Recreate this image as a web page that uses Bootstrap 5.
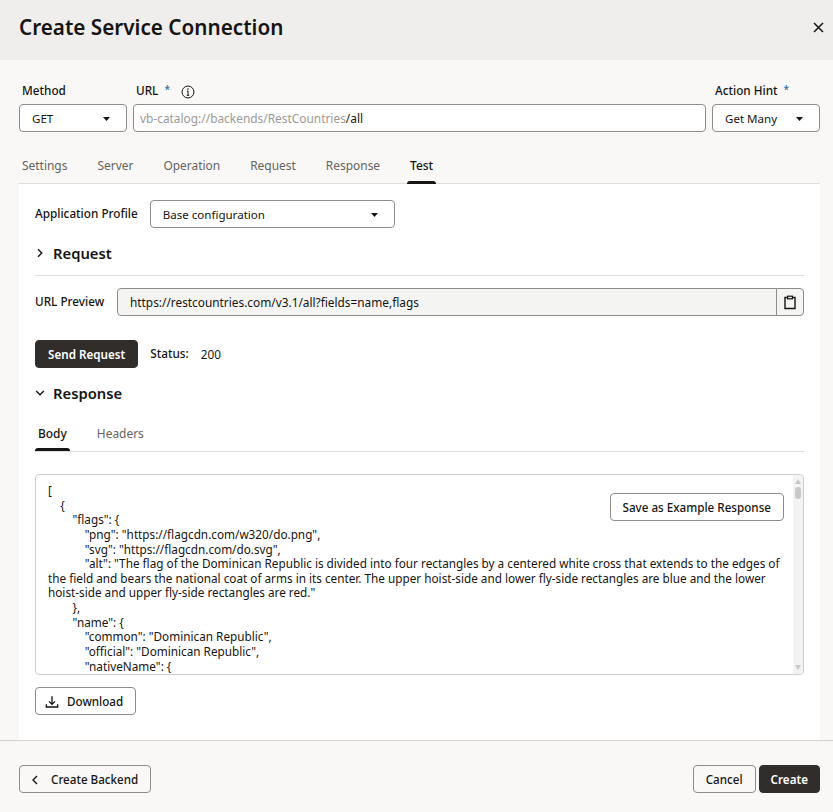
<!DOCTYPE html>
<html lang="en">
<head>
<meta charset="utf-8">
<title>Create Service Connection</title>
<link href="https://cdn.jsdelivr.net/npm/bootstrap@5.3.0/dist/css/bootstrap.min.css" rel="stylesheet">
<style>
html,body{height:100%;}
body{font-family:"Noto Sans","Open Sans",sans-serif;font-size:11.75px;color:#161513;background:#f9f8f6;overflow:hidden;}
.dlg{width:833px;height:812px;display:flex;flex-direction:column;}
.dlg-head{height:60px;background:#efeeec;padding:0 5px 0 19px;flex:none;}
.dlg-title{font-size:20.7px;font-weight:600;line-height:28px;margin:-6px 0 0;color:#161513;}
.icon-plain{background:none;border:0;padding:0;width:20px;height:20px;display:flex;align-items:center;justify-content:center;color:#161513;margin-top:-6px;}
.dlg-main{flex:1 1 auto;min-height:0;padding:0 13px 0 19px;display:flex;flex-direction:column;}
.top-form{padding-top:23px;gap:6px;}
.fld-label{font-size:11.75px;font-weight:500;line-height:15px;height:21px;padding-left:3px;color:#161513;display:flex;align-items:flex-start;}
.req{color:#2a6ea6;margin-left:6px;font-size:10px;line-height:12px;}
.info-ic{margin:2px 0 0 11px;}
.fld-method{width:108px;flex:none;}
.fld-url{flex:1 1 auto;min-width:0;}
.fld-hint{width:108px;flex:none;}
.fake-select{height:28px;border:1px solid #8e8c89;border-radius:4px;background:#fff;display:flex;align-items:center;justify-content:space-between;padding:1px 16px 0 12px;font-size:11.55px;color:#161513;}
.url-box{height:28px;border:1px solid #8e8c89;border-radius:4px;background:#fff;padding:1px 6px 0;display:flex;align-items:center;font-size:11.9px;}
.url-base{color:#9b9996;}
.tabs-main{border-bottom:1px solid #dfdedc;padding-left:3px;gap:30px;margin-top:20px;height:32px;}
.tabs-main .nav-link,.tabs-sub .nav-link{position:relative;padding:0;color:#65635f;font-size:11.95px;background:none;border:0;}
.tabs-main .nav-link{line-height:28px;}
.tabs-main .nav-link.active,.tabs-sub .nav-link.active{color:#161513;font-weight:500;}
.tabs-main .nav-link.active::after,.tabs-sub .nav-link.active::after{content:"";position:absolute;left:-3px;right:-3px;height:3px;background:#161513;border-radius:3px 3px 0 0;}
.tabs-main .nav-link.active::after{top:29px;}
.panel{flex:1 1 auto;min-height:0;background:#fff;padding:16px 16px 0;}
.lbl-strong{font-size:11.75px;font-weight:500;color:#161513;}
.profile-sel{width:245px;}
.sec-head{height:20px;gap:8px;}
.sec-head-req{margin-top:15px;}
.sec-title{font-size:14.8px;font-weight:600;line-height:20px;margin:0;color:#161513;}
.sec-rule{margin:12px 0 12px;border:0;border-top:1px solid #dfdedc;opacity:1;}
.lbl-preview{width:82px;flex:none;}
.url-group{flex:1 1 auto;width:auto;height:28px;}
.url-prev{height:28px;min-height:28px;font-size:11.85px;background:#f4f4f3;border:1px solid #8e8c89;border-radius:4px 0 0 4px;padding:0 12px;color:#161513;}
.url-copy{width:28px;height:28px;padding:0;background:#f4f4f3;border:1px solid #8e8c89;border-radius:0 4px 4px 0;display:flex;align-items:center;justify-content:center;}
.btn-dark-ui{height:28px;background:#312d2a;border:1px solid #312d2a;color:#fff;font-size:11.65px;font-weight:600;border-radius:4px;padding:1px 12px 0;line-height:1;}
.btn-create{padding:1px 11px 0;}
.btn-line{height:28px;background:#fff;border:1px solid #8e8c89;color:#161513;font-size:11.65px;font-weight:500;border-radius:4px;padding:1px 12px 0;line-height:1;display:inline-flex;align-items:center;}
.send-row{margin-top:24px;gap:12px;}
.status-val{padding-top:1px;}
.resp-head{margin-top:15px;}
.tabs-sub{border-bottom:1px solid #dfdedc;padding-left:3px;gap:30px;margin-top:20px;height:29px;}
.tabs-sub .nav-link{line-height:21px;}
.tabs-sub .nav-link.active::after{top:25px;}
.resp-box{position:relative;margin-top:22px;height:201px;border:1px solid #cfcecc;border-radius:4px;display:flex;overflow:hidden;background:#fff;}
.code-area{flex:1 1 auto;min-width:0;margin:0;padding:8px 0 0 12px;font-family:inherit;font-size:11.75px;line-height:14.63px;white-space:pre-wrap;overflow:hidden;color:#161513;}
.scroll-rail{width:10px;flex:none;background:#f3f3f2;display:flex;flex-direction:column;align-items:center;}
.arrow-up{width:0;height:0;border-left:3.5px solid transparent;border-right:3.5px solid transparent;border-bottom:5px solid #c9c8c6;margin-top:4px;}
.arrow-down{width:0;height:0;border-left:3.5px solid transparent;border-right:3.5px solid transparent;border-top:5px solid #c9c8c6;margin-top:auto;margin-bottom:4px;}
.thumb{width:6px;height:12px;border-radius:3px;background:#c9c8c6;margin-top:3px;}
.save-btn{position:absolute;top:18px;right:19px;}
.dl-row{margin-top:12px;}
.dl-btn{gap:8px;padding:1px 12px 0 9px;}
.dlg-foot{height:72px;flex:none;border-top:1px solid #d6d2cd;padding:5px 13px 0 19px;background:#f9f8f6;}
.btn-back{gap:12px;padding:1px 12px 0 11px;background:transparent;}
.btn-cancel{background:transparent;}
.foot-right{gap:3px;}
</style>
</head>
<body>
<div class="dlg">
  <header class="dlg-head d-flex align-items-center justify-content-between">
    <h1 class="dlg-title">Create Service Connection</h1>
    <button class="icon-plain" type="button" aria-label="Close">
      <svg width="11" height="11" viewBox="0 0 11 11"><path d="M1 1l9 9M10 1l-9 9" stroke="#161513" stroke-width="1.5" fill="none"/></svg>
    </button>
  </header>

  <main class="dlg-main">
    <div class="top-form d-flex">
      <div class="fld-method">
        <div class="fld-label">Method</div>
        <div class="fake-select"><span>GET</span><svg width="7" height="4" viewBox="0 0 7 4"><path d="M0 0h7L3.5 4z" fill="#161513"/></svg></div>
      </div>
      <div class="fld-url">
        <div class="fld-label">URL<span class="req">*</span>
          <svg class="info-ic" width="14" height="14" viewBox="0 0 14 14" fill="none"><circle cx="7" cy="7" r="6" stroke="#161513" stroke-width="1"/><path d="M7 6v4.2M5.8 10.3h2.4M5.9 6h1.1" stroke="#161513" stroke-width="1"/><circle cx="7" cy="4" r=".8" fill="#161513"/></svg>
        </div>
        <div class="url-box"><span class="url-base">vb-catalog://backends/RestCountries</span><span>/all</span></div>
      </div>
      <div class="fld-hint">
        <div class="fld-label">Action Hint<span class="req">*</span></div>
        <div class="fake-select"><span>Get Many</span><svg width="7" height="4" viewBox="0 0 7 4"><path d="M0 0h7L3.5 4z" fill="#161513"/></svg></div>
      </div>
    </div>

    <ul class="nav tabs-main">
      <li class="nav-item"><a class="nav-link" href="#">Settings</a></li>
      <li class="nav-item"><a class="nav-link" href="#">Server</a></li>
      <li class="nav-item"><a class="nav-link" href="#">Operation</a></li>
      <li class="nav-item"><a class="nav-link" href="#">Request</a></li>
      <li class="nav-item"><a class="nav-link" href="#">Response</a></li>
      <li class="nav-item"><a class="nav-link active" href="#">Test</a></li>
    </ul>

    <section class="panel">
      <div class="d-flex align-items-center gap-2">
        <span class="lbl-strong me-1">Application Profile</span>
        <div class="fake-select profile-sel"><span>Base configuration</span><svg width="7" height="4" viewBox="0 0 7 4"><path d="M0 0h7L3.5 4z" fill="#161513"/></svg></div>
      </div>

      <div class="sec-head sec-head-req d-flex align-items-center">
        <svg width="10" height="10" viewBox="0 0 10 10" fill="none"><path d="M3 1.2L6.8 5 3 8.8" stroke="#161513" stroke-width="1.4"/></svg>
        <h2 class="sec-title">Request</h2>
      </div>
      <hr class="sec-rule">
      <div class="d-flex align-items-center">
        <span class="lbl-strong lbl-preview">URL Preview</span>
        <div class="input-group url-group">
          <input class="form-control url-prev" type="text" readonly value="https://restcountries.com/v3.1/all?fields=name,flags">
          <button class="btn url-copy" type="button" aria-label="Copy">
            <svg width="14" height="15" viewBox="0 0 14 15" fill="none"><path d="M4.5 2.5H2v11h10v-11H9.5" stroke="#161513" stroke-width="1.4"/><rect x="4.6" y="1.2" width="4.8" height="2.6" stroke="#161513" stroke-width="1.2" fill="#f4f4f3"/></svg>
          </button>
        </div>
      </div>

      <div class="send-row d-flex align-items-center">
        <button class="btn btn-dark-ui" type="button">Send Request</button>
        <span class="lbl-strong">Status:</span>
        <span class="status-val">200</span>
      </div>

      <div class="sec-head resp-head d-flex align-items-center">
        <svg width="10" height="10" viewBox="0 0 10 10" fill="none"><path d="M1.2 3L5 6.8 8.8 3" stroke="#161513" stroke-width="1.4"/></svg>
        <h2 class="sec-title">Response</h2>
      </div>

      <ul class="nav tabs-sub">
        <li class="nav-item"><a class="nav-link active" href="#">Body</a></li>
        <li class="nav-item"><a class="nav-link" href="#">Headers</a></li>
      </ul>

      <div class="resp-box">
<pre class="code-area">[
    {
        "flags": {
            "png": "https://flagcdn.com/w320/do.png",
            "svg": "https://flagcdn.com/do.svg",
            "alt": "The flag of the Dominican Republic is divided into four rectangles by a centered white cross that extends to the edges of
the field and bears the national coat of arms in its center. The upper hoist-side and lower fly-side rectangles are blue and the lower
hoist-side and upper fly-side rectangles are red."
        },
        "name": {
            "common": "Dominican Republic",
            "official": "Dominican Republic",
            "nativeName": {</pre>
        <div class="scroll-rail"><span class="arrow-up"></span><span class="thumb"></span><span class="arrow-down"></span></div>
        <button class="btn btn-line save-btn" type="button">Save as Example Response</button>
      </div>

      <div class="dl-row">
        <button class="btn btn-line dl-btn" type="button">
          <svg width="14" height="14" viewBox="0 0 16 15" fill="none"><path d="M8 1v9M4.6 6.8L8 10.2l3.4-3.4" stroke="#161513" stroke-width="1.5"/><path d="M1.5 10v3.2h13V10" stroke="#161513" stroke-width="1.5"/></svg>
          Download
        </button>
      </div>
    </section>
  </main>

  <footer class="dlg-foot d-flex align-items-center justify-content-between">
    <button class="btn btn-line btn-back" type="button">
      <svg width="8" height="10" viewBox="0 0 8 10" fill="none"><path d="M6 1L2 5l4 4" stroke="#161513" stroke-width="1.4"/></svg>
      Create Backend
    </button>
    <div class="foot-right d-flex">
      <button class="btn btn-line btn-cancel" type="button">Cancel</button>
      <button class="btn btn-dark-ui btn-create" type="button">Create</button>
    </div>
  </footer>
</div>
<script src="https://cdn.jsdelivr.net/npm/bootstrap@5.3.0/dist/js/bootstrap.bundle.min.js"></script>
</body>
</html>
